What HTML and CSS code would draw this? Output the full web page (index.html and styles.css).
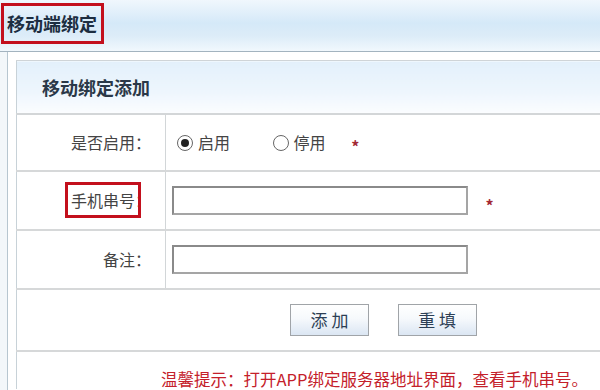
FILE: index.html
```html
<!DOCTYPE html>
<html lang="zh-CN">
<head>
    <meta charset="UTF-8">
    <title>移动端绑定</title>
    <link rel="stylesheet" href="styles.css">
</head>
<body>

    <div class="topbar">
        <h1 class="page-title">移动端绑定</h1>
    </div>

    <div class="outer">
        <table class="form-table">
            <tr>
                <th class="caption" colspan="2">移动绑定添加</th>
            </tr>
            <tr class="row">
                <td class="label">是否启用：</td>
                <td class="value">
                    <span class="radio checked"></span><span class="opt">启用</span>
                    <span class="radio"></span><span class="opt">停用</span>
                    <span class="req">*</span>
                </td>
            </tr>
            <tr class="row">
                <td class="label"><span class="mark">手机串号</span>：</td>
                <td class="value">
                    <input type="text" class="field">
                    <span class="req">*</span>
                </td>
            </tr>
            <tr class="row">
                <td class="label">备注：</td>
                <td class="value">
                    <input type="text" class="field">
                </td>
            </tr>
            <tr class="btn-row">
                <td colspan="2">
                    <button class="btn">添 加</button>
                    <button class="btn">重 填</button>
                </td>
            </tr>
            <tr class="tip-row">
                <td colspan="2">温馨提示：打开APP绑定服务器地址界面，查看手机串号。</td>
            </tr>
        </table>
    </div>

</body>
</html>
```

FILE: styles.css
```css
/* styles.css */
body {
    margin: 0;
    font-family: "Noto Sans CJK SC", "Microsoft YaHei", sans-serif;
    background: #f3f7fa;
    overflow: hidden;
}

.topbar {
    height: 52px;
    border-bottom: 1px solid #a3b3bf;
    background: linear-gradient(to bottom, #f0f7fd 0%, #d5e9f8 45%, #dcecf8 70%, #f1f8fd 100%);
    padding: 3px 0 0 1px;
    box-sizing: border-box;
}

.page-title {
    display: inline-block;
    margin: 0;
    height: 41px;
    line-height: 34px;
    padding: 0 4px 0 3px;
    border: 3px solid #c3101d;
    box-sizing: border-box;
    font-size: 18px;
    font-weight: bold;
    color: #1c2d40;
}

.outer {
    margin-left: 7px;
    border-left: 1px solid #b7c6d0;
    background: #fff;
    padding: 8px 0 0 8px;
    height: 340px;
}

.form-table {
    width: 640px;
    border-collapse: collapse;
    border-left: 1px solid #c8d2d8;
    border-top: 1px solid #cfd4d7;
}

.caption {
    height: 53px;
    box-sizing: border-box;
    text-align: left;
    padding: 0 0 0 25px;
    font-size: 18px;
    font-weight: bold;
    color: #2a3848;
    background: linear-gradient(to bottom, #e3f0fb 0%, #eef6fd 60%, #fbfdff 100%);
    border-bottom: 2px solid #d3d6d8;
}

.row td {
    border-bottom: 2px solid #d6d8d9;
    font-size: 16px;
    color: #444;
    padding-top: 0;
    padding-bottom: 0;
}

.row:nth-child(2) td { height: 55px; }
.row:nth-child(3) td,
.row:nth-child(4) td { height: 57px; }

.label {
    width: 133px;
    text-align: right;
    padding-right: 14px;
    border-right: 1px solid #d2d6d8;
}

.value {
    padding-left: 6px;
}

.mark {
    outline: 3px solid #c3101d;
    outline-offset: 3px;
}

.radio {
    display: inline-block;
    width: 14px;
    height: 14px;
    border: 1px solid #666;
    border-radius: 50%;
    vertical-align: -2px;
    margin-left: 5px;
    position: relative;
    background: #fff;
}

.radio.checked::after {
    content: "";
    position: absolute;
    left: 3px;
    top: 3px;
    width: 8px;
    height: 8px;
    border-radius: 50%;
    background: #222;
}

.opt {
    margin: 0 36px 0 5px;
}

.opt + .radio {
    margin-left: 3px;
}

.opt:nth-of-type(4) {
    margin-right: 22px;
}

.req {
    color: #a32a35;
    font-weight: bold;
    font-size: 16px;
    position: relative;
    top: 4px;
}

.field + .req {
    top: 8px;
}

.field {
    width: 296px;
    height: 29px;
    box-sizing: border-box;
    border: 2px solid #8a8a8a;
    border-right-color: #a5a5a5;
    border-bottom-color: #a5a5a5;
    margin: 0 14px 0 0;
    vertical-align: middle;
}

.btn-row td {
    height: 60px;
    padding: 0 0 0 273px;
    border-bottom: 2px solid #d6d8d9;
}

.btn {
    width: 79px;
    height: 32px;
    margin-right: 25px;
    border: 1px solid #a0a4a8;
    background: linear-gradient(to bottom, #ffffff 0%, #f6f9fc 45%, #dbe6f3 100%);
    font-family: "Noto Sans CJK SC", sans-serif;
    font-size: 17px;
    color: #2d3f55;
    cursor: pointer;
    vertical-align: middle;
}

.tip-row td {
    padding: 17px 0 0 144px;
    font-size: 16.5px;
    line-height: 20px;
    color: #c4202a;
    vertical-align: top;
    white-space: nowrap;
}
```
